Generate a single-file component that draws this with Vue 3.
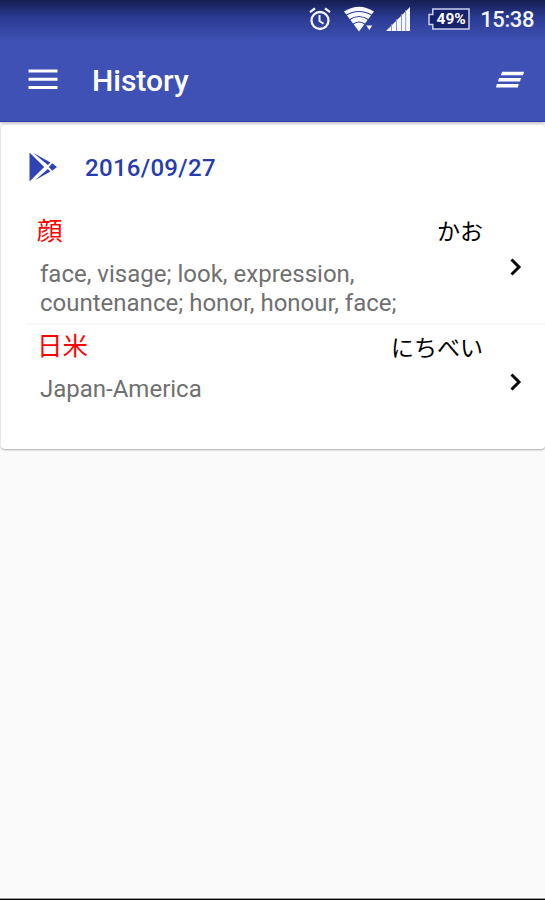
<template>
  <div class="screen">
    <header class="app-header">
      <div class="status-bar">
        <svg class="alarm" width="22" height="24" viewBox="0 0 22 24" fill="none" stroke="#f4f6ff">
          <circle cx="11" cy="13.5" r="8.5" stroke-width="2.3" />
          <path d="M10.5 8v6l4 2.8" stroke-width="2" />
          <path d="M1 5.2 6 1.4M21 5.2l-5-3.8" stroke-width="2.3" />
        </svg>
        <svg class="wifi" width="30" height="26" viewBox="0 0 30 26">
          <path d="M0 5.5Q15-4 30 5.5L15 25.5z" fill="#f8f9ff" />
          <g fill="none" stroke="#2c3c94" stroke-width="1.2">
            <path d="M1.5 9.5Q15 1.5 28.5 9.5" />
            <path d="M5 14Q15 7 25 14" />
            <path d="M8.5 18.5Q15 13.5 21.5 18.5" />
          </g>
          <path d="M21.5 19H29l-3.700 6z" fill="#f8f9ff" stroke="#3546a3" stroke-width="1" />
        </svg>
        <svg class="signal" width="24" height="24" viewBox="0 0 24 24">
          <path d="M0 24 24 0v24z" fill="#f8f9ff" />
          <path d="M5.5 17v7M10.5 12v12M15.5 7v17M19.7 3v21" stroke="#8a95cf" stroke-width="1" />
        </svg>
        <div class="battery">
          <svg width="42" height="22" viewBox="0 0 42 22" fill="#16226a" stroke="#c9cfec" stroke-width="1.5">
            <path d="M4.8 1H41v20H4.800v-4.500H1v-10h3.800z" />
          </svg>
          <span class="battery-level">49%</span>
        </div>
        <span class="clock">15:38</span>
      </div>
      <div class="toolbar">
        <svg class="menu" width="30" height="22" viewBox="0 0 30 22" stroke="#ffffff" stroke-width="3">
          <path d="M.5 2h29M.5 10.2h29M.5 18.4h29" />
        </svg>
        <h1 class="title">History</h1>
        <svg class="clear-all" width="28" height="18" viewBox="0 0 28 18" fill="#ffffff">
          <path d="M6 .8h22l-1 3.400H5zM3 7h22l-1 3.400H2zM.8 13h22l-1 3.400H0z" />
        </svg>
      </div>
    </header>

    <main class="card">
      <div class="card-header">
        <svg width="28" height="30" viewBox="0 0 28 30" fill="#3043b2">
          <path d="M.5.5v29L15.2 15z" />
          <path d="M4 .8 21.5 10.5 18.8 13zM6 28.2 21.5 19.5l-2.700-2.500z" />
          <path d="M23.2 11.2 28 15l-4.800 3.800L19.800 15z" />
        </svg>
        <h2 class="date">{{ date }}</h2>
      </div>
      <ul class="entries">
        <li v-for="entry in entries" :key="entry.word" class="entry">
          <div class="entry-body">
            <div class="entry-head">
              <span class="word">{{ entry.word }}</span>
              <span class="reading">{{ entry.reading }}</span>
            </div>
            <p class="meaning">{{ entry.meaning }}</p>
          </div>
          <svg class="chevron" width="12" height="18" viewBox="0 0 12 18" fill="none" stroke="#0a0a0a" stroke-width="3">
            <path d="M1.5 1.5 9 9l-7.500 7.500" />
          </svg>
        </li>
      </ul>
    </main>
    <div class="bottom-edge"></div>
  </div>
</template>

<script setup>
const date = "2016/09/27";

const entries = [
  {
    word: "顔",
    reading: "かお",
    meaning: "face, visage; look, expression, countenance; honor, honour, face;",
  },
  {
    word: "日米",
    reading: "にちべい",
    meaning: "Japan-America",
  },
];
</script>

<style>
body {
  margin: 0;
}
</style>

<style scoped>
.screen {
  display: flex;
  flex-direction: column;
  height: 900px;
  overflow: hidden;
  background: #fafafa;
  font-family: Roboto, "Noto Sans CJK JP", sans-serif;
}

.app-header {
  flex: none;
  box-sizing: border-box;
  height: 122px;
  background: linear-gradient(#151f51 0, #2b3b93 18px, #3f51b5 42px);
  border-bottom: 1px solid #2c3fac;
  box-shadow: 0 1px 4px rgba(0, 0, 0, 0.3);
}

.status-bar {
  display: flex;
  align-items: center;
  justify-content: flex-end;
  height: 38px;
  padding-right: 11px;
}

.wifi {
  margin-left: 13px;
}

.signal {
  margin-left: 12px;
}

.battery {
  position: relative;
  width: 42px;
  height: 22px;
  margin-left: 18px;
}

.battery svg {
  display: block;
}

.battery-level {
  position: absolute;
  inset: 0 0 0 4px;
  color: #ffffff;
  font-size: 15.5px;
  font-weight: 700;
  line-height: 22px;
  text-align: center;
}

.clock {
  margin-left: 10px;
  color: #f4f6ff;
  font-size: 22px;
  font-weight: 500;
  letter-spacing: -0.4px;
}

.toolbar {
  display: flex;
  align-items: center;
  height: 84px;
  padding: 0 21px 0 28px;
}

.title {
  flex: 1;
  margin: 1px 0 0 34px;
  color: #ffffff;
  font-size: 30px;
  font-weight: 500;
}

.card {
  flex: none;
  box-sizing: border-box;
  height: 324px;
  margin: 3px 0 0 1px;
  border-radius: 4px;
  background: #ffffff;
  box-shadow: 0 1px 2px rgba(0, 0, 0, 0.32);
}

.card-header {
  display: flex;
  align-items: center;
  height: 84px;
  padding-left: 28px;
}

.date {
  margin: 2px 0 0 28px;
  color: #283cad;
  font-size: 24px;
  font-weight: 500;
  letter-spacing: 0.3px;
}

.entries {
  margin: 0 0 0 24px;
  padding: 0;
  list-style: none;
}

.entry {
  display: flex;
  align-items: center;
  box-sizing: border-box;
  height: 115px;
  padding-right: 23px;
}

.entry + .entry {
  margin-top: -1px;
  border-top: 2px solid #f7f7f7;
}

.entry-body {
  flex: 1;
  align-self: flex-start;
  padding-left: 12px;
}

.entry-head {
  display: flex;
  align-items: center;
  justify-content: space-between;
  height: 42px;
}

.entry + .entry .entry-head {
  height: 41px;
}

.word {
  margin-top: -4px;
  color: #ff0000;
  font-size: 25.5px;
}

.reading {
  color: #000000;
  font-size: 23px;
}

.meaning {
  width: 370px;
  margin: 9px 0 0 3px;
  color: #707070;
  font-size: 24px;
  line-height: 29px;
}

.chevron {
  margin-left: 27px;
}

.bottom-edge {
  flex: none;
  height: 1px;
  margin-top: auto;
  border-top: 1px solid #999999;
  background: #000000;
}
</style>
